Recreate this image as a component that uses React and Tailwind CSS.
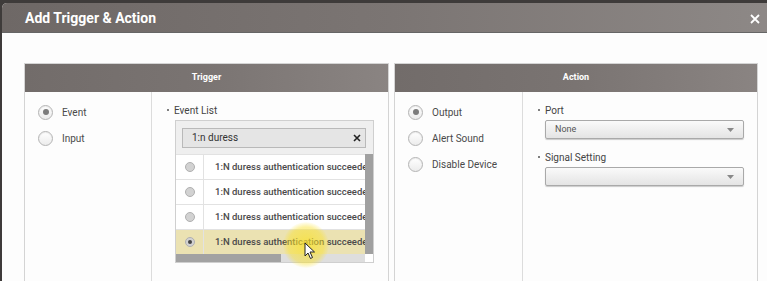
import React from "react";

const rows = [
  { id: 1, checked: false },
  { id: 2, checked: false },
  { id: 3, checked: false },
  { id: 4, checked: true },
];

const Radio = ({ checked, label }) => (
  <div className="flex h-[26px] items-center gap-[9px]">
    <span className="flex h-[15px] w-[15px] items-center justify-center rounded-full border border-[#b4b4b4] bg-gradient-to-b from-[#ffffff] to-[#ececec] shadow-[inset_0_1px_1px_rgba(0,0,0,0.08)]">
      {checked && <span className="h-[6px] w-[6px] rounded-full bg-[#7c7c7c]" />}
    </span>
    <span className="text-[10px] text-[#4a4a4a]">{label}</span>
  </div>
);

const Label = ({ children }) => (
  <div className="flex h-[12px] items-center gap-[5px] text-[10px] text-[#444]">
    <span className="h-[2px] w-[2px] rounded-full bg-[#555]" />
    {children}
  </div>
);

const Select = ({ value }) => (
  <div className="mt-[4px] ml-[7px] flex h-[19px] w-[199px] items-center justify-between rounded-[2px] border border-[#a9a9a9] bg-gradient-to-b from-[#fafafa] to-[#e4e4e4] px-[9px] shadow-[0_1px_1px_rgba(0,0,0,0.2)]">
    <span className="text-[9px] text-[#555]">{value}</span>
    <svg width="7" height="4" viewBox="0 0 7 4">
      <path d="M0 0 L7 0 L3.5 4 Z" fill="#888" />
    </svg>
  </div>
);

const PanelHeader = ({ title }) => (
  <div className="flex h-[28px] items-center justify-center bg-gradient-to-r from-[#726c6a] via-[#7a7472] to-[#8a8482] text-[9px] font-bold text-white">
    {title}
  </div>
);

export default function App() {
  return (
    <div
      className="relative h-[281px] w-[767px] overflow-hidden bg-[#3e3b3a]"
      style={{ fontFamily: "Roboto, 'Liberation Sans', sans-serif" }}
    >
      <div className="ml-[2px] mt-[3px] h-[300px] w-[780px] overflow-hidden rounded-tl-[5px] bg-[#fdfdfd]">
        {/* Title bar */}
        <div className="flex h-[30px] items-center justify-between bg-gradient-to-r from-[#6e6866] via-[#7b7573] to-[#8e8987] pl-[23px] pr-[20px] pt-[2px] border-b border-[#666]">
          <span className="text-[14px] font-bold text-white">Add Trigger &amp; Action</span>
          <svg width="10" height="10" viewBox="0 0 10 10" className="mr-[2px]">
            <path d="M1 1 L9 9 M9 1 L1 9" stroke="#fff" strokeWidth="1.8" />
          </svg>
        </div>

        {/* Body */}
        <div className="flex gap-[5px] pl-[22px] pt-[30px]">
          {/* Trigger */}
          <div className="h-[260px] w-[365px] border-x border-t border-[#d4d4d4]">
            <PanelHeader title="Trigger" />
            <div className="flex h-full">
              <div className="w-[127px] border-r border-[#dcdcdc] pl-[13px] pt-[7px]">
                <Radio checked label="Event" />
                <Radio label="Input" />
              </div>
              <div className="pl-[15px] pt-[12px]">
                <Label>Event List</Label>
                <div className="mt-[4px] ml-[8px] w-[199px] border border-[#cfcfcf]">
                  <div className="flex h-[33px] items-center bg-[#efefef] px-[6px]">
                    <div className="flex h-[20px] w-[184px] items-center justify-between border border-[#b9b9b9] bg-[#e5e5e5] pl-[9px] pr-[4px]">
                      <span className="text-[10px] text-[#333]">1:n duress</span>
                      <svg width="8" height="8" viewBox="0 0 8 8">
                        <path d="M1 1 L7 7 M7 1 L1 7" stroke="#222" strokeWidth="1.6" />
                      </svg>
                    </div>
                  </div>
                  <div className="flex">
                    <div className="w-[190px] overflow-hidden">
                      {rows.map((r) => (
                        <div
                          key={r.id}
                          className={`flex h-[25px] border-t border-[#e2e2e2] ${r.checked ? "bg-[#ebe2b2]" : "bg-white"}`}
                        >
                          <div className="flex w-[28px] shrink-0 items-center justify-center border-r border-[#e2e2e2]">
                            <span className="flex h-[10px] w-[10px] items-center justify-center rounded-full border border-[#b0b0b0] bg-[#d2d2d2]">
                              {r.checked && <span className="h-[4px] w-[4px] rounded-full bg-[#444]" />}
                            </span>
                          </div>
                          <span className="flex items-center whitespace-nowrap pl-[11px] text-[9.5px] font-medium text-[#4a4a4a]">
                            1:N duress authentication succeeded
                          </span>
                        </div>
                      ))}
                    </div>
                    <div className="w-[8px] bg-[#a0a0a0]" />
                  </div>
                  <div className="flex h-[8px]">
                    <div className="w-[106px] bg-[#a2a2a2]" />
                    <div className="w-[84px] bg-[#dedede]" />
                    <div className="w-[8px] bg-white" />
                  </div>
                </div>
              </div>
            </div>
          </div>

          {/* Action */}
          <div className="h-[260px] w-[364px] border-x border-t border-[#d4d4d4]">
            <PanelHeader title="Action" />
            <div className="flex h-full">
              <div className="w-[128px] border-r border-[#dcdcdc] pl-[13px] pt-[7px]">
                <Radio checked label="Output" />
                <Radio label="Alert Sound" />
                <Radio label="Disable Device" />
              </div>
              <div className="pl-[15px] pt-[12px]">
                <Label>Port</Label>
                <Select value="None" />
                <div className="mt-[12px]">
                  <Label>Signal Setting</Label>
                  <Select value="" />
                </div>
              </div>
            </div>
          </div>
        </div>
      </div>

      {/* cursor highlight */}
      <div className="pointer-events-none absolute left-[283px] top-[222px] h-[46px] w-[46px] rounded-full bg-[radial-gradient(circle,rgba(250,225,40,0.75)_0%,rgba(250,225,40,0.45)_55%,rgba(250,225,40,0)_72%)]" />
      <svg className="absolute left-[304px] top-[242px]" width="12" height="18" viewBox="0 0 12 18">
        <path d="M1 1 L1 14 L4 11 L6.5 16.5 L8.5 15.5 L6 10 L10.5 10 Z" fill="#fff" stroke="#222" strokeWidth="1" />
      </svg>
    </div>
  );
}
